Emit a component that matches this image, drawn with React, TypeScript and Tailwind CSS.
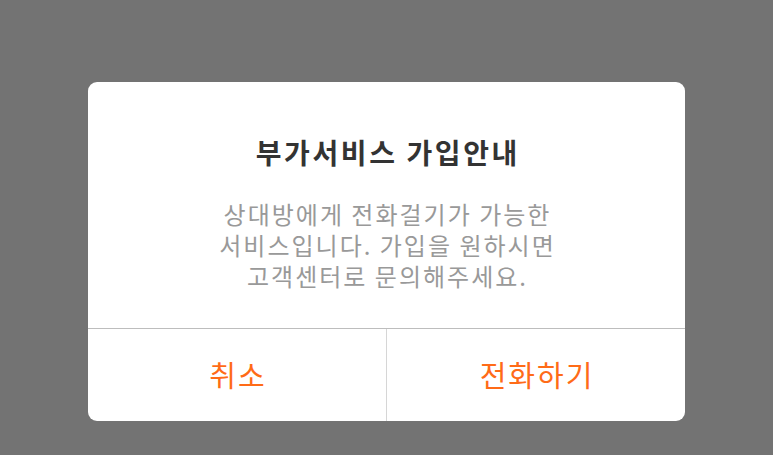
export default function App() {
  return (
    <div
      className="w-[773px] h-[455px] bg-[#737373] flex justify-center pt-[82px]"
      style={{ fontFamily: '"Noto Sans CJK KR", "Noto Sans", sans-serif' }}
    >
      <div className="w-[597px] h-[339px] bg-white rounded-[9px] flex flex-col overflow-hidden">
        {/* Title + message */}
        <div className="flex-1 flex flex-col items-center pt-[52px]">
          <h2 className="text-[28px] leading-[36px] font-bold text-[#333333] tracking-[2.6px] pl-[2.6px]">
            부가서비스 가입안내
          </h2>
          <p className="mt-[28px] text-[24px] leading-[31px] text-[#999999] text-center tracking-[2px] pl-[2px]">
            상대방에게 전화걸기가 가능한
            <br />
            서비스입니다. 가입을 원하시면
            <br />
            고객센터로 문의해주세요.
          </p>
        </div>

        {/* Buttons */}
        <div className="h-[93px] border-t border-[#bdbdbd] flex">
          <button className="flex-1 flex items-center justify-center text-[29px] text-[#ff6b17] tracking-[2px] pl-[2px]">
            취소
          </button>
          <div className="w-px bg-[#d6d6d6]" />
          <button className="flex-1 flex items-center justify-center text-[29px] text-[#ff6b17] tracking-[2px] pl-[2px]">
            전화하기
          </button>
        </div>
      </div>
    </div>
  );
}
